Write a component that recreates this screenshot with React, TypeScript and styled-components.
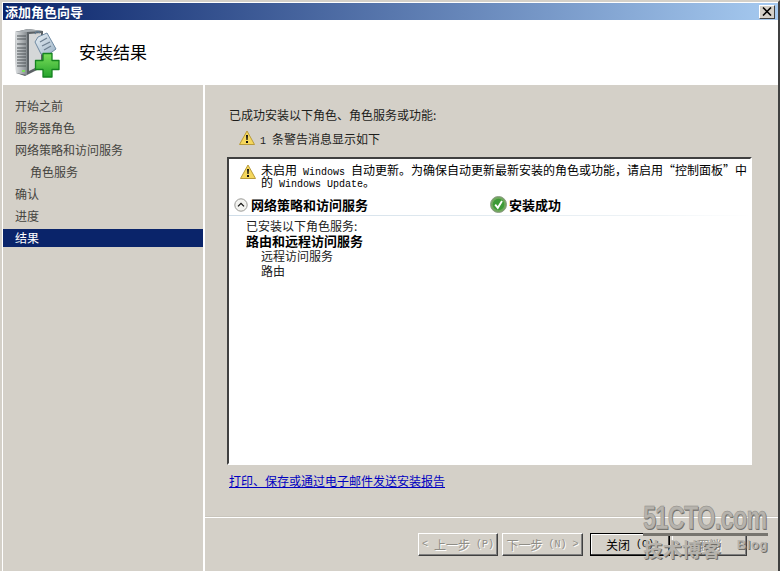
import styled, { createGlobalStyle } from "styled-components";

const GlobalStyle = createGlobalStyle`
html, body, #root {
  margin: 0;
  padding: 0;
  width: 780px;
  height: 571px;
  overflow: hidden;
}
* {
  box-sizing: border-box;
}
body {
  font-family: "Noto Sans CJK SC", "Liberation Sans", sans-serif;
  font-size: 12px;
  color: #000;
}
`;

const Frame = styled.div`
  position: relative;
  width: 780px;
  height: 571px;
  display: flex;
  flex-direction: column;
  background: #d4d0c8;
  border-top: 2px solid #d4d0c8;
  border-left: 2px solid #d4d0c8;
  border-right: 2px solid #404040;
  padding: 1px 0 0 1px;
  box-shadow: inset 1px 1px 0 #ffffff;
`;

const TitleBar = styled.div`
  height: 17px;
  flex: none;
  display: flex;
  align-items: center;
  justify-content: space-between;
  padding: 0 3px 0 2px;
  background: linear-gradient(90deg, #0a246a, #a6caf0);
  color: #fff;
  font-size: 13px;
  font-weight: 700;
  line-height: 17px;
`;

const CloseButton = styled.div`
  width: 16px;
  height: 14px;
  display: flex;
  align-items: center;
  justify-content: center;
  background: #d4d0c8;
  border: 1px solid;
  border-color: #fff #404040 #404040 #fff;
`;

const Header = styled.div`
  height: 65px;
  flex: none;
  display: flex;
  align-items: center;
  background: #fff;
  padding: 0 0 0 12px;
  gap: 19px;
`;

const HeaderTitle = styled.h1`
  margin: 0;
  font-size: 17px;
  font-weight: 400;
  line-height: 24px;
  position: relative;
  top: -1px;
`;

const Body = styled.div`
  flex: 1;
  min-height: 0;
  display: flex;
`;

const Sidebar = styled.nav`
  width: 200px;
  flex: none;
  padding-top: 12px;
  display: flex;
  flex-direction: column;
`;

const NavItem = styled.div<{ $active?: boolean; $indent?: boolean }>`
  height: 18px;
  margin-bottom: 4px;
  line-height: 18px;
  padding-left: ${(p) => (p.$indent ? 27 : 12)}px;
  color: ${(p) => (p.$active ? "#fff" : "#45443f")};
  background: ${(p) => (p.$active ? "#0a246a" : "transparent")};
`;

const Main = styled.main`
  flex: 1;
  min-width: 0;
  display: flex;
  flex-direction: column;
  border-left: 2px solid #fff;
`;

const Content = styled.div`
  flex: 1;
  min-height: 0;
  display: flex;
  flex-direction: column;
  padding: 21px 26px 0 22px;
`;

const Lead = styled.div`
  line-height: 18px;
  height: 18px;
  padding-left: 2px;
  color: #1d1d1b;
`;

const WarningRow = styled.div`
  display: flex;
  align-items: center;
  gap: 5px;
  height: 18px;
  margin-top: 5px;
  padding-left: 12px;
  color: #1d1d1b;
`;

const Panel = styled.div`
  height: 308px;
  margin-top: 10px;
  background: #fff;
  border: 2px solid;
  border-color: #404040 #fff #fff #404040;
  display: flex;
  flex-direction: column;
`;

const Notice = styled.div`
  display: flex;
  gap: 5px;
  padding: 5px 0 0 11px;
`;

const NoticeLine = styled.div`
  height: 12px;
  line-height: 12px;
  white-space: nowrap;
`;

const Mono = styled.span`
  font-family: "Liberation Mono", monospace;
  font-size: 10px;
  line-height: 1;
  white-space: pre;
`;

const SectionHead = styled.div`
  display: flex;
  align-items: center;
  margin-top: 6px;
  height: 22px;
  padding-left: 5px;
  border-bottom: 1px solid;
  border-image: linear-gradient(90deg, #cfdde8, #eef3f6 80%, #fff) 1;
  font-size: 13px;
  font-weight: 700;
`;

const SectionLeft = styled.div`
  width: 256px;
  display: flex;
  align-items: center;
  gap: 3px;
`;

const SectionRight = styled.div`
  display: flex;
  align-items: center;
  gap: 2px;
`;

const Details = styled.div`
  padding: 2px 0 0 17px;
  line-height: 15px;
  color: #222;
`;

const DetailBold = styled.div`
  font-size: 13px;
  font-weight: 700;
  color: #000;
`;

const DetailSub = styled.div`
  padding-left: 15px;
`;

const ReportLink = styled.a`
  margin-top: 7px;
  padding-left: 2px;
  line-height: 17px;
  color: #0000c0;
  text-decoration: underline;
`;

const Footer = styled.div`
  height: 54px;
  flex: none;
  display: flex;
  justify-content: flex-end;
  gap: 7px;
  padding: 15px 31px 0 0;
  border-top: 1px solid #fff;
  box-shadow: 0 -1px 0 #c9c5bc;
`;

const ButtonGroup = styled.div<{ $gap: number }>`
  display: flex;
  gap: ${(p) => p.$gap}px;
`;

const Button = styled.div<{ $disabled?: boolean; $primary?: boolean; $width: number }>`
  width: ${(p) => p.$width}px;
  height: 23px;
  display: flex;
  align-items: center;
  justify-content: center;
  white-space: nowrap;
  border: 1px solid;
  border-color: ${(p) => (p.$primary ? "#000" : "#fff #404040 #404040 #fff")};
  color: ${(p) => (p.$disabled ? "#8f8d86" : "#000")};
  text-shadow: ${(p) => (p.$disabled ? "1px 1px 0 #fff" : "none")};
  box-shadow: ${(p) =>
    p.$primary
      ? "inset -1px -1px 0 #404040, inset 1px 1px 0 #fff"
      : "inset -1px -1px 0 #808080"};
`;

const Watermark = styled.div`
  position: absolute;
  left: 641px;
  top: 499px;
  width: 125px;
  color: #b6b3ad;
  text-shadow: 1px 1px 0 #6f6d68;
  pointer-events: none;
`;

const WatermarkLogo = styled.div`
  font-family: "Liberation Sans", sans-serif;
  font-size: 34px;
  font-weight: 700;
  line-height: 32px;
  letter-spacing: -1px;
  transform: scaleX(0.69);
  transform-origin: left center;
  white-space: nowrap;
  -webkit-text-stroke: 0.5px #8c8a85;
`;

const WatermarkRule = styled.div`
  height: 3px;
  margin-top: 0;
  background: #77756f;
`;

const WatermarkRow = styled.div`
  display: flex;
  justify-content: space-between;
  align-items: center;
`;

const WatermarkCn = styled.span`
  font-size: 19.5px;
  font-weight: 700;
  line-height: 26px;
`;

const WatermarkBlog = styled.span`
  font-family: "Liberation Sans", sans-serif;
  font-size: 13px;
  font-weight: 700;
  letter-spacing: 0.6px;
  position: relative;
  top: -5px;
`;

const ServerIcon = () => (
  <svg width="45" height="50" viewBox="0 0 45 50">
    <defs>
      <linearGradient id="srvFront" x1="0" x2="1">
        <stop offset="0" stopColor="#dfe2e4" />
        <stop offset="1" stopColor="#858b8f" />
      </linearGradient>
      <linearGradient id="tagFill" x1="0" y1="0" x2="1" y2="1">
        <stop offset="0" stopColor="#eaf1f6" />
        <stop offset="1" stopColor="#9db3c6" />
      </linearGradient>
      <linearGradient id="plusFill" x1="0" y1="0" x2="0" y2="1">
        <stop offset="0" stopColor="#7ade5a" />
        <stop offset="1" stopColor="#25a32c" />
      </linearGradient>
    </defs>
    <path d="M0 4 L13 1 L28 3 L28 39 L10 48 L1 45 Z" fill="#5c6266" />
    <path d="M0 4 L12 3 L12 47 L1 45 Z" fill="url(#srvFront)" />
    <path d="M0 4 L13 1 L28 3 L12 4 Z" fill="#a7adb1" />
    <path d="M14 6 L26 5 L26 37 L14 43 Z" fill="#d5d7d8" />
    <path d="M2 8 H11 M2 11 H11 M2 16 H11 M2 20 H11 M2 23 H11 M2 26 H11 M2 29 H11 M2 32 H11 M2 35 H11 M2 38 H11" stroke="#4f5559" strokeWidth="1.2" />
    <path d="M7 43 H10" stroke="#7ade5a" strokeWidth="2" />
    <path d="M20 6 Q21 2 25 5" fill="none" stroke="#5f7a92" strokeWidth="1.2" />
    <path d="M23 9 L32 5 L41 21 L33 27 L26 26 L20 14 Z" fill="url(#tagFill)" stroke="#6f8aa3" strokeWidth="1" />
    <path d="M25 14 L32 10 M27 18 L35 14 M29 22 L36 18" stroke="#6d7f90" strokeWidth="1.3" />
    <path
      d="M28 25.5 H37 V32.5 H44 V41.5 H37 V49 H28 V41.5 H20.5 V32.5 H28 Z"
      fill="url(#plusFill)"
      stroke="#14831f"
      strokeWidth="1.3"
      strokeLinejoin="round"
    />
  </svg>
);

const WarningIcon = () => (
  <svg width="16" height="16" viewBox="0 0 16 16" style={{ flex: "none" }}>
    <path
      d="M8 1 L15.5 14.5 H0.5 Z"
      fill="#f5d75c"
      stroke="#b89a3a"
      strokeWidth="1"
      strokeLinejoin="round"
    />
    <path d="M7 5 H9 L8.6 10 H7.4 Z M7 11 H9 V13 H7 Z" fill="#111" />
  </svg>
);

const CollapseIcon = () => (
  <svg width="14" height="14" viewBox="0 0 14 14" style={{ flex: "none" }}>
    <circle cx="7" cy="7" r="6.2" fill="#f3f3f0" stroke="#9a9a96" />
    <path d="M4 8.4 L7 5.4 L10 8.4" fill="none" stroke="#111" strokeWidth="1.3" />
  </svg>
);

const SuccessIcon = () => (
  <svg width="17" height="17" viewBox="0 0 17 17" style={{ flex: "none" }}>
    <circle cx="8.5" cy="8.5" r="8" fill="#6fa85c" stroke="#8b9a84" />
    <circle cx="8.5" cy="8.5" r="5.8" fill="#3d9a37" />
    <path d="M5.2 8.6 L7.8 11.8 L12 5" fill="none" stroke="#fff" strokeWidth="1.9" />
  </svg>
);

const CloseGlyph = () => (
  <svg width="10" height="9" viewBox="0 0 10 9">
    <path d="M1 0.5 L9 8.5 M9 0.5 L1 8.5" stroke="#000" strokeWidth="1.6" />
  </svg>
);

const navItems = [
  { label: "开始之前" },
  { label: "服务器角色" },
  { label: "网络策略和访问服务" },
  { label: "角色服务", indent: true },
  { label: "确认" },
  { label: "进度" },
  { label: "结果", active: true },
];

const App: React.FC = () => {
  return (
    <>
      <GlobalStyle />
      <Frame>
        <TitleBar>
          <span>添加角色向导</span>
          <CloseButton>
            <CloseGlyph />
          </CloseButton>
        </TitleBar>
        <Header>
          <ServerIcon />
          <HeaderTitle>安装结果</HeaderTitle>
        </Header>
        <Body>
          <Sidebar>
            {navItems.map((item) => (
              <NavItem key={item.label} $active={item.active} $indent={item.indent}>
                {item.label}
              </NavItem>
            ))}
          </Sidebar>
          <Main>
            <Content>
              <Lead>已成功安装以下角色、角色服务或功能:</Lead>
              <WarningRow>
                <WarningIcon />
                <span>
                  <Mono>{"1 "}</Mono>条警告消息显示如下
                </span>
              </WarningRow>
              <Panel>
                <Notice>
                  <WarningIcon />
                  <div>
                    <NoticeLine>
                      未启用<Mono>{" Windows "}</Mono>自动更新。为确保自动更新最新安装的角色或功能，请启用“控制面板”中
                    </NoticeLine>
                    <NoticeLine>
                      的<Mono>{" Windows Update"}</Mono>。
                    </NoticeLine>
                  </div>
                </Notice>
                <SectionHead>
                  <SectionLeft>
                    <CollapseIcon />
                    网络策略和访问服务
                  </SectionLeft>
                  <SectionRight>
                    <SuccessIcon />
                    安装成功
                  </SectionRight>
                </SectionHead>
                <Details>
                  <div>已安装以下角色服务:</div>
                  <DetailBold>路由和远程访问服务</DetailBold>
                  <DetailSub>远程访问服务</DetailSub>
                  <DetailSub>路由</DetailSub>
                </Details>
              </Panel>
              <ReportLink>打印、保存或通过电子邮件发送安装报告</ReportLink>
            </Content>
            <Footer>
              <ButtonGroup $gap={4}>
                <Button $disabled $width={80}>
                  <Mono>{"< "}</Mono>上一步<Mono>{" (P)"}</Mono>
                </Button>
                <Button $disabled $width={81}>
                  下一步<Mono>{" (N) >"}</Mono>
                </Button>
              </ButtonGroup>
              <ButtonGroup $gap={2}>
                <Button $primary $width={80}>
                  关闭<Mono>{" (O)"}</Mono>
                </Button>
                <Button $disabled $width={75}>
                  取消
                </Button>
              </ButtonGroup>
            </Footer>
          </Main>
        </Body>
        <Watermark>
          <WatermarkLogo>51CTO.com</WatermarkLogo>
          <WatermarkRule />
          <WatermarkRow>
            <WatermarkCn>技术博客</WatermarkCn>
            <WatermarkBlog>Blog</WatermarkBlog>
          </WatermarkRow>
        </Watermark>
      </Frame>
    </>
  );
};

export default App;
